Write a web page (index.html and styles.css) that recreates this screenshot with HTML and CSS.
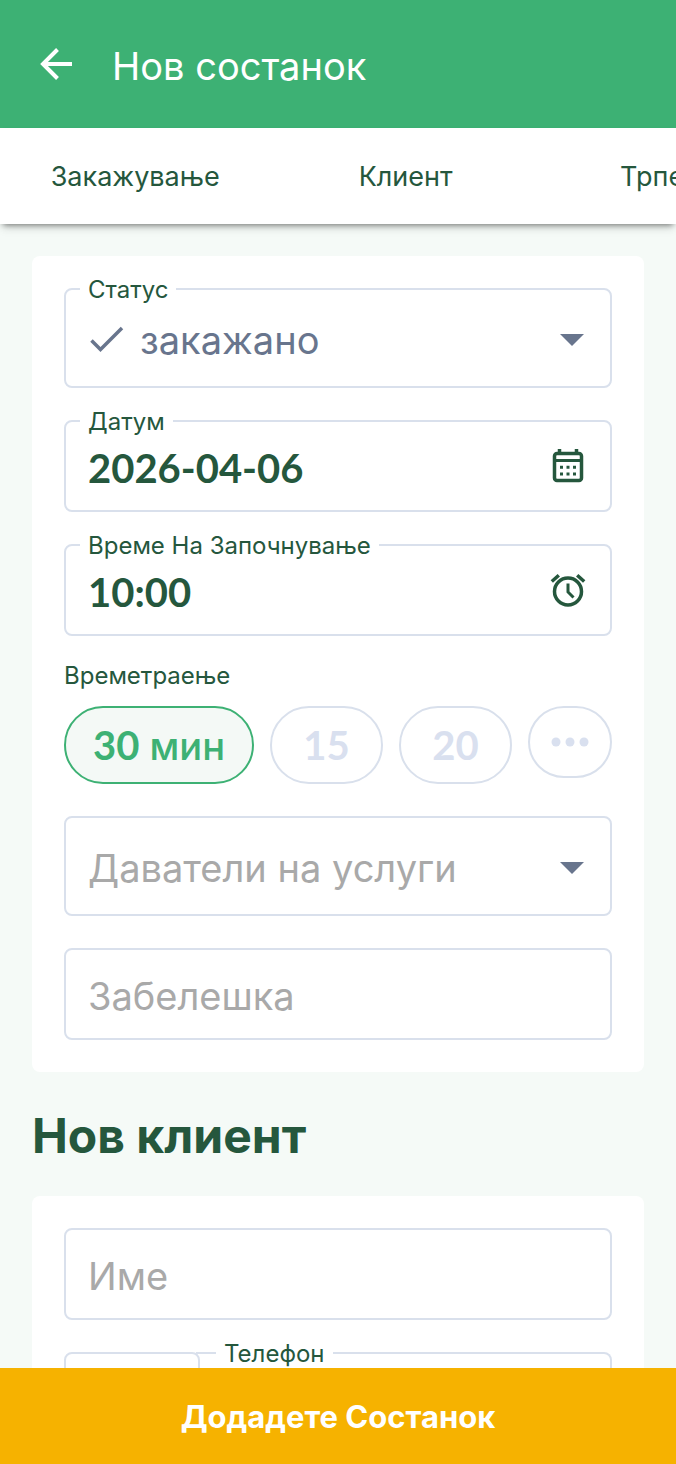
FILE: index.html
```html
<!DOCTYPE html>
<html lang="mk">
<head>
<meta charset="utf-8">
<meta name="viewport" content="width=device-width, initial-scale=1">
<title>Нов состанок</title>
<link rel="stylesheet" href="styles.css">
</head>
<body>
<div class="app">
  <header class="top-bar">
    <button class="back" type="button" aria-label="Назад">
      <svg width="32" height="32" viewBox="0 0 32 32" fill="none" stroke="currentColor" stroke-width="4"><path d="M32 16H3M17.500 1.500 3 16l14.500 14.500"/></svg>
    </button>
    <h1 class="title">Нов состанок</h1>
  </header>
  <nav class="tabs">
    <a class="tab" href="#booking">Закажување</a>
    <a class="tab" href="#client">Клиент</a>
    <a class="tab" href="#extra">Трпение</a>
  </nav>
  <main class="content">
    <section class="card" id="booking">
      <div class="field field-select">
        <label class="field-label" for="status">Статус</label>
        <svg class="check" width="34" height="28" viewBox="0 0 34 28" fill="none" stroke="currentColor" stroke-width="3.500"><path d="M1.500 14.500 10.500 23.500 32 2"/></svg>
        <select class="control" id="status"><option>закажано</option></select>
        <svg class="caret" width="24" height="12" viewBox="0 0 24 12"><path d="M0 0h24L12 12z" fill="currentColor"/></svg>
      </div>
      <div class="field">
        <label class="field-label" for="date">Датум</label>
        <input class="control numeric" id="date" type="text" value="2026-04-06">
        <svg class="icon" width="40" height="40" viewBox="0 0 40 40" fill="none" stroke="currentColor"><rect x="6.500" y="7.500" width="27" height="27" rx="2.500" stroke-width="3.500"/><path d="M6 14.500h28" stroke-width="3"/><path d="M11.500 3v5M28.500 3v5" stroke-width="3.500"/><path d="M12 21.300h3m3.500 0h3m3.500 0h3M12 28h3m3.500 0h3m3.500 0h3" stroke-width="3"/></svg>
      </div>
      <div class="field">
        <label class="field-label" for="time">Време На Започнување</label>
        <input class="control numeric" id="time" type="text" value="10:00">
        <svg class="icon" width="40" height="40" viewBox="0 0 40 40" fill="none" stroke="currentColor" stroke-width="3.500"><circle cx="20" cy="21.500" r="13.500"/><path d="M20 13.500v8.500l5.500 5.500" stroke-width="3"/><path d="M3.800 11.500 10.800 5.200M36.200 11.500 29.200 5.200"/></svg>
      </div>
      <div class="duration" role="group" aria-labelledby="duration-label">
        <span class="duration-label" id="duration-label">Времетраење</span>
        <div class="pills">
          <button class="pill pill-active" type="button"><span class="num">30</span> мин</button>
          <button class="pill" type="button"><span class="num">15</span></button>
          <button class="pill" type="button"><span class="num">20</span></button>
          <button class="pill pill-more" type="button" aria-label="Повеќе"><svg width="38" height="10" viewBox="0 0 38 10" fill="currentColor"><circle cx="5" cy="5" r="4.500"/><circle cx="19" cy="5" r="4.500"/><circle cx="33" cy="5" r="4.500"/></svg></button>
        </div>
      </div>
      <div class="field field-select">
        <select class="control placeholder" aria-label="Даватели на услуги"><option>Даватели на услуги</option></select>
        <svg class="caret" width="24" height="12" viewBox="0 0 24 12"><path d="M0 0h24L12 12z" fill="currentColor"/></svg>
      </div>
      <div class="field">
        <input class="control" type="text" placeholder="Забелешка" aria-label="Забелешка">
      </div>
    </section>
    <h2 class="section-title">Нов клиент</h2>
    <section class="card" id="client">
      <div class="field">
        <input class="control" type="text" placeholder="Име" aria-label="Име">
      </div>
      <div class="phone">
        <div class="field phone-code"><input class="control" type="text" aria-label="Код на држава"></div>
        <div class="field phone-number">
          <label class="field-label" for="phone">Телефон</label>
          <input class="control" id="phone" type="tel">
        </div>
      </div>
    </section>
  </main>
  <button class="submit" type="submit">Додадете Состанок</button>
</div>
</body>
</html>
```
FILE: styles.css
```css
* {
  box-sizing: border-box;
}

body {
  margin: 0;
  background: #f5faf7;
  color: #25573d;
  font-family: Inter, "Noto Sans", sans-serif;
}

button,
input,
select {
  font: inherit;
  color: inherit;
}

.app {
  display: flex;
  flex-direction: column;
  height: 100vh;
  overflow: hidden;
}

.top-bar {
  display: flex;
  flex: none;
  align-items: center;
  gap: 40px;
  height: 128px;
  padding: 0 40px;
  background: #3db174;
  color: #fff;
}

.back {
  display: flex;
  padding: 0;
  border: 0;
  background: none;
}

.title {
  margin: 0;
  padding-top: 4px;
  font-size: 38px;
  font-weight: 400;
  line-height: 48px;
}

.tabs {
  position: relative;
  display: flex;
  flex: none;
  height: 96px;
  background: #fff;
  box-shadow: 0 4px 6px -3px rgba(0, 0, 0, 0.5), 0 6px 10px -2px rgba(0, 0, 0, 0.1);
}

.tab {
  display: flex;
  flex: 0 0 40%;
  align-items: center;
  justify-content: center;
  color: inherit;
  font-size: 27px;
  text-decoration: none;
}

.content {
  flex: 1;
  min-height: 0;
  padding: 32px;
  overflow: hidden auto;
  scrollbar-width: none;
}

.card {
  display: flex;
  flex-direction: column;
  gap: 32px;
  padding: 32px;
  border-radius: 8px;
  background: #fff;
}

.field {
  position: relative;
  display: flex;
  align-items: center;
  min-width: 0;
  height: 92px;
  padding: 0 22px;
  border: 2px solid #d9e0ec;
  border-radius: 8px;
}

.field-select {
  height: 100px;
  color: #68758d;
}

.field-label {
  position: absolute;
  top: -16px;
  left: 14px;
  padding: 0 8px;
  background: #fff;
  color: #25573d;
  font-size: 24px;
  line-height: 32px;
}

.control {
  flex: 1;
  min-width: 0;
  height: 100%;
  padding: 4px 0 0;
  border: 0;
  outline: 0;
  appearance: none;
  background: none;
  font-size: 38px;
}

.control::placeholder,
.placeholder {
  color: #a9a9a9;
  opacity: 1;
}

.numeric,
.num {
  font-family: Lato, Inter, sans-serif;
  font-size: 40px;
  font-weight: 700;
}

.check {
  margin: 4px 16px 0 2px;
}

.caret {
  margin: 4px 4px 0 0;
  pointer-events: none;
}

.duration {
  display: flex;
  flex-direction: column;
  gap: 14px;
  margin-top: -8px;
}

.duration-label {
  font-size: 24px;
  line-height: 32px;
}

.pills {
  display: flex;
  align-items: flex-start;
  gap: 16px;
}

.pill {
  height: 78px;
  padding: 0 27px;
  border: 2px solid #d9e0ec;
  border-radius: 40px;
  background: #fff;
  color: #d9e0ef;
  font-size: 38px;
  white-space: nowrap;
}

.pill:not(.pill-active) {
  flex: 1 1 0;
  padding: 0;
}

.pill-active {
  border-color: #3db174;
  background: #f4f9f6;
  color: #3db174;
  font-weight: 500;
}

.pill.pill-more {
  display: flex;
  flex: 0 0 84px;
  align-items: center;
  justify-content: center;
  height: 72px;
}

.section-title {
  margin: 0;
  padding: 34px 0 30px;
  font-size: 48px;
  font-weight: 700;
  line-height: 60px;
}

.phone {
  display: flex;
}

.phone-code {
  flex: 0 0 136px;
}

.phone-number {
  flex: 1;
  margin-left: -4px;
  border-left: 0;
  border-radius: 0 8px 8px 0;
}

.phone-number .field-label {
  left: 20px;
}

.submit {
  flex: none;
  height: 96px;
  border: 0;
  background: #f6b200;
  color: #fff;
  font-size: 31px;
  font-weight: 700;
}
```
